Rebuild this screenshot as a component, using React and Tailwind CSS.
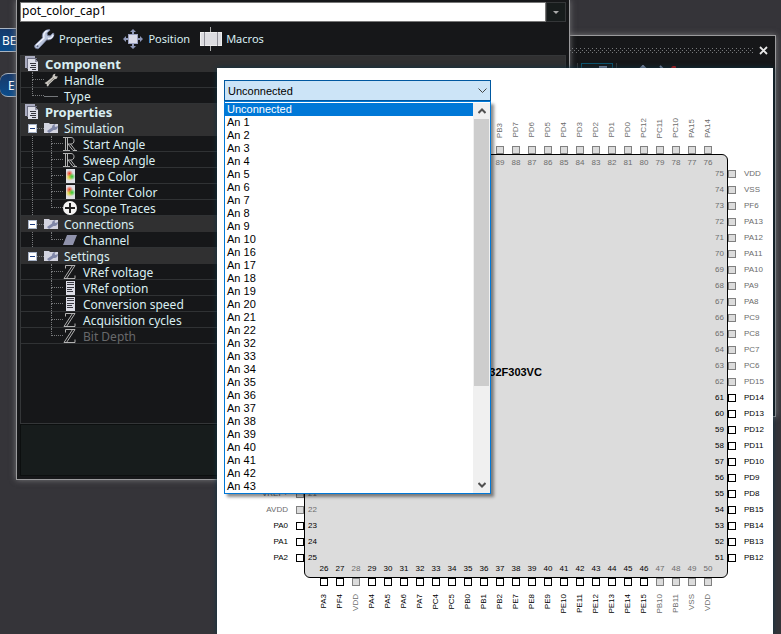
import { useState } from "react";

const TREE = [
  { kind: "header", label: "Component" },
  { kind: "item", label: "Handle", icon: "wrench" },
  { kind: "item", label: "Type", icon: "line", last: true },
  { kind: "header", label: "Properties" },
  { kind: "group", label: "Simulation", trunk: true },
  { kind: "leaf", label: "Start Angle", icon: "real", trunk: true },
  { kind: "leaf", label: "Sweep Angle", icon: "real", trunk: true },
  { kind: "leaf", label: "Cap Color", icon: "color", trunk: true },
  { kind: "leaf", label: "Pointer Color", icon: "color", trunk: true },
  { kind: "leaf", label: "Scope Traces", icon: "scope", trunk: true, last: true },
  { kind: "group", label: "Connections", trunk: true },
  { kind: "leaf", label: "Channel", icon: "channel", trunk: true, last: true },
  { kind: "group", label: "Settings" },
  { kind: "leaf", label: "VRef voltage", icon: "int" },
  { kind: "leaf", label: "VRef option", icon: "list" },
  { kind: "leaf", label: "Conversion speed", icon: "list" },
  { kind: "leaf", label: "Acquisition cycles", icon: "int" },
  { kind: "leaf", label: "Bit Depth", icon: "int", last: true, disabled: true },
];

const CHANNELS = [
  "Unconnected", "An 1", "An 2", "An 3", "An 4", "An 5", "An 6", "An 7", "An 8", "An 9",
  "An 10", "An 16", "An 17", "An 18", "An 19", "An 20", "An 21", "An 22", "An 32", "An 33",
  "An 34", "An 35", "An 36", "An 37", "An 38", "An 39", "An 40", "An 41", "An 42", "An 43",
];

const pin = (num, name, free = true) => ({ num, name, free });

const TOP_PINS = ["PB3", "PD7", "PD6", "PD5", "PD4", "PD3", "PD2", "PD1", "PD0", "PC12", "PC11", "PC10", "PA15", "PA14"]
  .map((name, i) => pin(89 - i, name, false));

const RIGHT_PINS = [
  "VDD", "VSS", "PF6", "PA13", "PA12", "PA11", "PA10", "PA9", "PA8", "PC9", "PC8", "PC7", "PC6",
  "PD15", "PD14", "PD13", "PD12", "PD11", "PD10", "PD9", "PD8", "PB15", "PB14", "PB13", "PB12",
].map((name, i) => pin(75 - i, name, i > 13));

const BOTTOM_PINS = [
  "PA3", "PF4", "VDD", "PA4", "PA5", "PA6", "PA7", "PC4", "PC5", "PB0", "PB1", "PB2", "PE7",
  "PE8", "PE9", "PE10", "PE11", "PE12", "PE13", "PE14", "PE15", "PB10", "PB11", "VSS", "VDD",
].map((name, i) => pin(26 + i, name, i !== 2 && i < 21));

const LEFT_PINS = [
  pin(21, "VREF+", false),
  pin(22, "AVDD", false),
  pin(23, "PA0"),
  pin(24, "PA1"),
  pin(25, "PA2"),
];

const WrenchIcon = () => (
  <svg viewBox="0 0 22 22" className="size-[22px]" aria-hidden="true">
    <path
      d="M2 17 9.500 10C8.500 5.500 11 1.800 16.500 1.500l.5.7-3 2.800.5 2.500 2.600.3L20 5l.9.7c0 4.300-3.300 6.800-7.200 6.100L6.400 19.700C4.600 22 .3 20 2 17z"
      fill="#b9c4dc"
      stroke="#7c87a5"
      strokeWidth=".8"
    />
    <path d="M3 17.500 11 10C10 6.500 11.500 3.500 14.500 2.700M15 10.500c2.500.2 4.500-1 5.200-3.700" fill="none" stroke="#f2f5ff" strokeWidth="1.300" />
    <circle cx="4.500" cy="18.200" r="1" fill="#5a6480" />
  </svg>
);

const PositionIcon = () => (
  <svg viewBox="0 0 22 22" className="size-[22px]" aria-hidden="true">
    <path
      d="M11 1 14 4H12V6H10V4H8zM11 21 8 18h2v-2h2v2h2zM1 11l3-3v2h2v2H4v2zM21 11l-3 3v-2h-2v-2h2V8z"
      fill="#8f98b8"
    />
    <rect x="6.500" y="6.500" width="9" height="9" fill="#d9dae8" stroke="#9aa0c0" />
  </svg>
);

const MacrosIcon = () => (
  <svg viewBox="0 0 22 24" className="h-6 w-[22px]" aria-hidden="true">
    <path d="M10.500 0v24" stroke="#aaa" />
    <rect x=".5" y="5.500" width="21" height="13" fill="#dcdce0" stroke="#eee" />
    <path d="M4.500 5v14M17.500 5v14" stroke="#8e8e96" />
  </svg>
);

const HeaderIcon = () => (
  <svg viewBox="0 0 14 16" className="h-4 w-3.5" aria-hidden="true">
    <path d="M0 0h10v2H2v10H0z" fill="#a9abbf" />
    <path d="M2 2h10v1H4v10H2z" fill="#6e7084" />
    <path d="M3 3h7l3 3v9H3z" fill="#dcdde8" />
    <path d="M10 3v3h3z" fill="#8f91a6" />
    <path d="M5 7.500h6M6 9.500h5M5 11.500h6M7 13.500h4" stroke="#34343c" />
  </svg>
);

const FolderIcon = () => (
  <svg viewBox="0 0 14 12" className="h-3 w-3.5 shrink-0" aria-hidden="true">
    <path d="M0 1h5l1 1h8v9H0z" fill="#d3d4e0" />
    <path d="M3 9 8 5.500C8 3.500 9.500 2 11.500 2L10.500 4l1 1L14 4c0 3-2 4.500-4.500 4L5 11z" fill="#8087a8" />
  </svg>
);

const ICONS = {
  wrench: (
    <svg viewBox="0 0 14 14" className="size-3.5 shrink-0" aria-hidden="true">
      <path d="M.5 10 3 8.500 8.500 4C8.300 2 9.500.7 11.500.8L10.800 2.500 12 3.500 13.500 3c.3 2-1 3.300-3 3.300L5.500 11 4 13.500 2.700 13l.3-1.500L2 11z" fill="#c9c6c0" />
      <path d="M4 10.500 10 5" stroke="#77736c" strokeWidth=".8" />
    </svg>
  ),
  line: (
    <svg viewBox="0 0 14 14" className="size-3.5" aria-hidden="true">
      <path d="M0 7.500h14" stroke="#74777a" />
    </svg>
  ),
  real: (
    <svg viewBox="0 0 14 14" className="size-3.5" fill="none" stroke="#c4c4c4" aria-hidden="true">
      <path d="M0 .5h8c4 0 4 6.500 0 6.500H5M2.500 1v12M4.500 1v12M0 13.500h7M5 7l5 6.500h4M7.500 7l5 6.500" strokeWidth=".9" />
    </svg>
  ),
  int: (
    <svg viewBox="0 0 14 14" className="size-3.5" fill="none" stroke="#c4c4c4" aria-hidden="true">
      <path d="M2.500 3.500v-3H12L3.500 13.500M9.500.5 1 13.500h11v-3" strokeWidth=".9" />
    </svg>
  ),
  color: (
    <svg viewBox="0 0 14 14" className="size-3.5" aria-hidden="true">
      <defs>
        <radialGradient id="red"><stop stopColor="#f04020" /><stop offset="1" stopColor="#f04020" stopOpacity="0" /></radialGradient>
        <radialGradient id="green"><stop stopColor="#30c830" /><stop offset="1" stopColor="#30c830" stopOpacity="0" /></radialGradient>
        <radialGradient id="yellow"><stop stopColor="#e8d020" /><stop offset="1" stopColor="#e8d020" stopOpacity="0" /></radialGradient>
      </defs>
      <path d="M3 0h9v14H3z" fill="#dfe0e6" />
      <circle cx="6.500" cy="8" r="4" fill="url(#yellow)" />
      <circle cx="6.500" cy="4.500" r="3.500" fill="url(#red)" />
      <circle cx="9" cy="7.500" r="3.500" fill="url(#green)" />
    </svg>
  ),
  scope: (
    <svg viewBox="0 0 14 14" className="size-3.5" aria-hidden="true">
      <circle cx="7" cy="7" r="7" fill="#f4f4f4" />
      <path d="M7 2v10M2 7h10" stroke="#222" strokeWidth="2" />
    </svg>
  ),
  channel: (
    <svg viewBox="0 0 14 14" className="size-3.5" aria-hidden="true">
      <path d="M4 2h10l-4 10H0z" fill="#8f92ab" />
    </svg>
  ),
  list: (
    <svg viewBox="0 0 14 14" className="size-3.5" aria-hidden="true">
      <path d="M3 0h9v14H3z" fill="#dcdde6" />
      <path d="M4 1.500h7M4 3.500h7M4 6.500h7M4 8.500h5M4 10.500h6" stroke="#3a3a42" />
    </svg>
  ),
};

// Dotted branch that joins a row to its parent
const Elbow = ({ last }) => (
  <span className="flex h-full w-3 shrink-0 flex-col">
    <span className="h-1/2 border-b border-l border-dotted border-[#77797b]" />
    <span className={last ? "h-1/2" : "h-1/2 border-l border-dotted border-[#77797b]"} />
  </span>
);

const TreeRow = ({ row }) => {
  if (row.kind === "header") {
    return (
      <li className="flex h-4 items-center gap-1.5 bg-[#303031] pl-1">
        <HeaderIcon />
        <span className="text-[13px] leading-4 font-bold">{row.label}</span>
      </li>
    );
  }

  if (row.kind === "group") {
    return (
      <li className="flex h-4 items-center bg-[#303031] pl-[7px]">
        <button
          aria-label={`Collapse ${row.label}`}
          className="flex size-[9px] items-center justify-center border border-[#a8b4c8] bg-white"
        >
          <span className="h-px w-[5px] bg-[#1c3c80]" />
        </button>
        <span className="w-[7px] border-b border-dotted border-[#77797b]" />
        <FolderIcon />
        <span className="pt-0.5 pl-1.5">{row.label}</span>
      </li>
    );
  }

  return (
    <li className="flex h-4 items-center border-b border-[#303234] pl-[11px]">
      {row.kind === "leaf" && (
        <span
          className={
            row.trunk
              ? "h-full w-[19px] border-l border-dotted border-[#77797b]"
              : "h-full w-[19px]"
          }
        />
      )}
      <Elbow last={row.last} />
      {ICONS[row.icon]}
      <span className={row.disabled ? "pt-0.5 pl-1.5 text-[#68696b]" : "pt-0.5 pl-1.5"}>{row.label}</span>
    </li>
  );
};

const PropertiesWindow = () => (
  <section className="absolute top-0 right-[27%] left-4 border border-t-0 border-[#9b9b9d] bg-[#161719] px-[3px] pt-0.5 pb-[3px] text-[12px] leading-4 text-[#d9eef2] shadow-[0_0_6px_#77777a]">
    <div className="flex h-5">
      <input
        aria-label="Component name"
        defaultValue="pot_color_cap1"
        className="min-w-0 flex-1 border border-[#777] bg-white px-px pb-0.5 text-[12px] text-black outline-none"
      />
      <button aria-label="Choose component" className="flex w-5 items-center justify-center border border-[#343638] bg-[#171c1c]">
        <svg viewBox="0 0 6 3" className="h-[3px] w-1.5"><path d="M0 0h6L3 3z" fill="#aaa" /></svg>
      </button>
    </div>
    <div className="flex h-[33px] items-center gap-2.5 pl-[13px] text-[11px]">
      <button className="flex items-center gap-1">
        <WrenchIcon />
        Properties
      </button>
      <button className="flex items-center gap-1">
        <PositionIcon />
        Position
      </button>
      <button className="flex items-center gap-1">
        <MacrosIcon />
        Macros
      </button>
    </div>
    <ul className="h-[369px] border border-[#343638]">
      {TREE.map((row) => (
        <TreeRow key={row.kind + row.label} row={row} />
      ))}
    </ul>
    <div className="h-[52px] border border-[#0c0f0f] bg-[#171c1c]" />
  </section>
);

const PanelWindow = () => (
  <section className="absolute top-[35px] right-[5px] left-1/2 h-[382px] border border-[#9b9b9d] bg-[#161719] shadow-[0_0_6px_#77777a]">
    <div className="flex h-[27px] items-center gap-1.5 pt-0.5 pr-[7px]">
      <svg className="h-[5px] flex-1" aria-hidden="true">
        <defs>
          <pattern id="grip" width="4" height="4" patternUnits="userSpaceOnUse">
            <path d="M0 0h1v1H0zM2 2h1v1H2z" fill="#77797b" />
          </pattern>
        </defs>
        <rect width="100%" height="5" fill="url(#grip)" />
      </svg>
      <button aria-label="Close">
        <svg viewBox="0 0 9 9" className="size-[9px]">
          <path d="M1 1l7 7M8 1 1 8" stroke="#e8e8e8" strokeWidth="1.800" />
        </svg>
      </button>
    </div>
    <div className="flex justify-end gap-[3px] pr-[99px]">
      <span className="h-6 w-px bg-[#3a3c3e]" />
      <button aria-label="View" className="flex h-6 w-8 justify-end border border-[#0d5570] pt-0.5 pr-[5px]">
        <span className="size-2 bg-[#8991ad]" />
      </button>
      <span className="h-6 w-px bg-[#3a3c3e]" />
      <svg viewBox="0 0 56 8" className="mt-0.5 h-2 w-14" aria-hidden="true">
        <path d="M20 4 23 1l3 3M40 1l3 3" stroke="#8991ad" strokeWidth="2" fill="none" />
        <circle cx="54" cy="4" r="3" fill="#e01818" />
      </svg>
    </div>
  </section>
);

const PinBox = ({ free }) => (
  <span
    className={
      free
        ? "size-2 shrink-0 border border-black bg-white"
        : "size-2 shrink-0 border border-[#808080] bg-[#dcdcdc]"
    }
  />
);

const pinColor = (free) => (free ? "text-black" : "text-[#6c6c6c]");

const Chip = () => (
  <div className="grid grid-cols-[87px_auto_1fr] text-[8px] leading-4">
    <div className="col-start-2 flex h-[37px] justify-end pr-3">
      {TOP_PINS.map((p) => (
        <div key={p.num} className={`flex w-4 flex-col items-center justify-end gap-2 ${pinColor(p.free)}`}>
          <span className="rotate-180 [writing-mode:vertical-rl]">{p.name}</span>
          <PinBox free={p.free} />
        </div>
      ))}
    </div>

    <div className="col-start-1 row-start-2 flex flex-col justify-end pb-3">
      {LEFT_PINS.map((p) => (
        <div key={p.num} className={`flex h-4 items-center justify-end gap-2 ${pinColor(p.free)}`}>
          {p.name}
          <PinBox free={p.free} />
        </div>
      ))}
    </div>

    <div className="row-start-2 flex flex-col justify-between rounded-md border border-black bg-[#dcdcdc]">
      <div className="flex justify-end pr-[11px]">
        {TOP_PINS.map((p) => (
          <span key={p.num} className={`w-4 text-center ${pinColor(p.free)}`}>{p.num}</span>
        ))}
      </div>
      <div className="flex items-center justify-between px-[3px]">
        <div className="-mb-[5px] flex flex-col self-end">
          {LEFT_PINS.map((p) => (
            <span key={p.num} className={`h-4 ${pinColor(p.free)}`}>{p.num}</span>
          ))}
        </div>
        <strong className="pt-3 pr-6 text-[11px]">STM32F303VC</strong>
        <div className="-my-[5px] flex flex-col">
          {RIGHT_PINS.map((p) => (
            <span key={p.num} className={`h-4 ${pinColor(p.free)}`}>{p.num}</span>
          ))}
        </div>
      </div>
      <div className="flex px-[11px]">
        {BOTTOM_PINS.map((p) => (
          <span key={p.num} className={`w-4 text-center ${pinColor(p.free)}`}>{p.num}</span>
        ))}
      </div>
    </div>

    <div className="row-start-2 flex flex-col py-3">
      {RIGHT_PINS.map((p) => (
        <div key={p.num} className={`flex h-4 items-center gap-2 ${pinColor(p.free)}`}>
          <PinBox free={p.free} />
          {p.name}
        </div>
      ))}
    </div>

    <div className="col-start-2 flex px-3">
      {BOTTOM_PINS.map((p) => (
        <div key={p.num} className={`flex w-4 flex-col items-center gap-2 ${pinColor(p.free)}`}>
          <PinBox free={p.free} />
          <span className="rotate-180 [writing-mode:vertical-rl]">{p.name}</span>
        </div>
      ))}
    </div>
  </div>
);

const ChannelSelect = () => {
  const [channel, setChannel] = useState("Unconnected");

  return (
    <div className="relative w-[267px] text-[11px]">
      <select
        aria-label="Channel"
        value={channel}
        onChange={(e) => setChannel(e.target.value)}
        className="block h-[21px] w-full appearance-none border border-[#0058a0] bg-[#cce4f7] px-[3px] pt-px text-black outline-none"
      >
        {CHANNELS.map((name) => (
          <option key={name}>{name}</option>
        ))}
      </select>
      <svg viewBox="0 0 9 5" className="pointer-events-none absolute top-2 right-1 h-[5px] w-[9px]" fill="none" aria-hidden="true">
        <path d="M.5.5l4 4 4-4" stroke="#444" />
      </svg>

      <div className="absolute top-full left-0 z-10 flex w-full border border-[#0078d7] bg-white pt-px shadow-[3px_3px_3px_rgba(0,0,0,0.45)]">
        <ul role="listbox" aria-label="Channels" className="flex-1">
          {CHANNELS.map((name) => (
            <li
              key={name}
              role="option"
              aria-selected={name === channel}
              onClick={() => setChannel(name)}
              className={
                name === channel
                  ? "h-[13px] bg-[#0078d7] pl-0.5 leading-[13px] text-white"
                  : "h-[13px] pl-0.5 leading-[13px] text-black"
              }
            >
              {name}
            </li>
          ))}
        </ul>
        <div className="flex w-[17px] flex-col items-center bg-[#f0f0f0]">
          <button aria-label="Scroll up" className="flex h-4 items-center">
            <svg viewBox="0 0 8 6" className="h-1.5 w-2" fill="none"><path d="M.5 5 4 1.500 7.500 5" stroke="#505050" strokeWidth="2" /></svg>
          </button>
          <span className="h-[267px] w-[15px] bg-[#cdcdcd]" />
          <button aria-label="Scroll down" className="mt-auto flex h-[17px] items-center">
            <svg viewBox="0 0 8 6" className="h-1.5 w-2" fill="none"><path d="M.5 1 4 4.500 7.500 1" stroke="#505050" strokeWidth="2" /></svg>
          </button>
        </div>
      </div>
    </div>
  );
};

const App = () => (
  <main className="relative min-h-screen overflow-hidden bg-[#353439] font-['Noto_Sans',sans-serif]">
    <div className="flex w-10 flex-col gap-[21px] pt-7 text-[12px] text-white">
      <button className="h-6 border-y border-[#a9b4c2] bg-linear-to-b from-[#16396a] to-[#0a4d8c] pt-0.5 pl-0.5 text-left">BE</button>
      <button className="h-6 rounded-l-lg border-y border-[#a9b4c2] bg-linear-to-b from-[#16396a] to-[#0a4d8c] pt-0.5 pl-2 text-left">E</button>
    </div>
    <PanelWindow />
    <PropertiesWindow />
    <section className="absolute top-[68px] right-2 left-[217px] min-h-[calc(100vh-68px)] bg-white font-['Liberation_Sans',sans-serif] shadow-[0_0_5px_#0d3344]">
      <div className="px-[7px] pt-3 pb-4">
        <ChannelSelect />
      </div>
      <Chip />
    </section>
  </main>
);

export default App;
